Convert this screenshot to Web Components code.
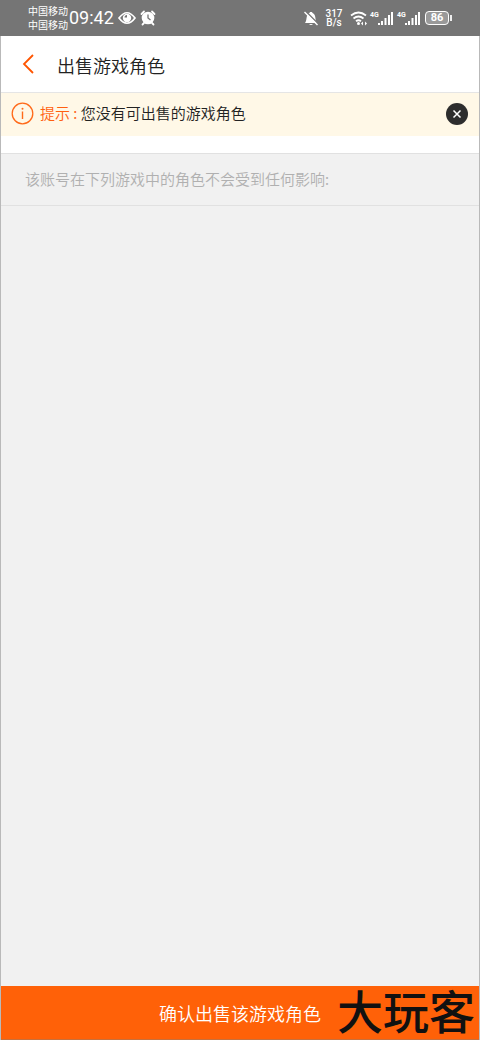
<!DOCTYPE html>
<html lang="zh-CN">
<head>
<meta charset="utf-8">
<meta name="viewport" content="width=device-width, initial-scale=1">
<title>出售游戏角色</title>
<style>
html, body { margin: 0; }
body { font-family: "Noto Sans CJK SC", sans-serif; background: #f1f1f1; color: #333; }
</style>
</head>
<body>
<sell-page></sell-page>
<script>
const define = (name, markup, setup) => {
  const template = document.createElement('template');
  template.innerHTML = '<style>*{box-sizing:border-box}svg{display:block;flex:none}button{font:inherit;border:0;padding:0;margin:0;background:none;cursor:pointer}</style>' + markup;
  customElements.define(name, class extends HTMLElement {
    constructor() {
      super();
      this.attachShadow({ mode: 'open' }).append(template.content.cloneNode(true));
      if (setup) setup(this);
    }
  });
};

define('signal-bars', `
<style>
:host { display: flex; align-items: flex-start; font: 700 7px/8px Roboto, sans-serif; }
span { width: 8px; }
</style>
<span>4G</span>
<svg width="16" height="15" viewBox="0 0 16 15" fill="#fff"><path d="M0 12h2v2H0zM3 10h2v4H3zM6.500 7h2v7h-2zM10 4h2v10h-2zM13 1h2v13h-2z"/></svg>`);

define('status-bar', `
<style>
:host { display: flex; align-items: center; justify-content: space-between; height: 36px; padding: 0 28px; background: #757575; color: #fff; }
.group { display: flex; align-items: center; }
.carriers { font-size: 10px; line-height: 14px; width: 41px; white-space: nowrap; }
.carriers div { height: 14px; }
.time { font: 400 18px/20px Roboto, sans-serif; margin-right: 4px; }
.left svg + svg { margin-left: 4px; }
.speed { font: 500 10px/9px Roboto, sans-serif; text-align: center; width: 18px; margin: 0 7px 0 6px; }
signal-bars { margin-left: 3px; }
.battery { margin-left: 4px; display: flex; align-items: center; }
.level { width: 24px; height: 14px; border: 1px solid #fff; border-radius: 4px; background: #999; font: 700 11px/12px Roboto, sans-serif; text-align: center; }
.tip { width: 2px; height: 6px; background: #eee; margin-left: 1px; }
</style>
<div class="group left">
  <div class="carriers"><div>中国移动</div><div>中国移动</div></div>
  <span class="time">09:42</span>
  <svg width="18" height="14" viewBox="0 0 18 14"><path d="M1 7Q9-3.500 17 7 9 17.500 1 7Z" fill="none" stroke="#fff" stroke-width="1.700"/><circle cx="9" cy="7" r="4.200" fill="#fff"/><path d="M6.500 6.500A2.500 2.500 0 0 1 9 4v2.500Z" fill="#757575"/></svg>
  <svg width="16" height="16" viewBox="0 0 16 16"><path d="m1.500 4 2.500-2.500m8 0L14.500 4M4 13l-1.500 1.500M12 13l1.500 1.500" stroke="#fff" stroke-width="1.800" stroke-linecap="round"/><circle cx="8" cy="8" r="6.300" fill="#fff"/><path d="M8 4.500V8l2.500 2" fill="none" stroke="#757575" stroke-width="1.300"/></svg>
</div>
<div class="group">
  <svg width="16" height="16" viewBox="0 0 16 16"><path d="M2 13c2-2 1-7 3-9 1-1 2-1 2-2h2c0 1 1 1 2 2 2 2 1 7 3 9ZM6 14h4q-2 2-4 0Z" fill="#fff"/><path d="M2.500 1 15.500 14" stroke="#757575" stroke-width="1.500"/><path d="M1.500 2 14.500 15" stroke="#fff" stroke-width="1.400"/></svg>
  <div class="speed">317<br>B/s</div>
  <svg width="17" height="16" viewBox="0 0 17 16"><path d="M1 5.500q7.500-6 15 0M3.500 8.500q5-4 10 0M6 11.200q2.500-2 5 0" fill="none" stroke="#fff" stroke-width="1.800"/><circle cx="8.500" cy="13.500" r="1.500" fill="#fff"/><path d="m11 13.500 2-2v4Zm6 0-2-2v4Z" fill="#fff"/></svg>
  <signal-bars></signal-bars><signal-bars></signal-bars>
  <div class="battery"><div class="level">86</div><div class="tip"></div></div>
</div>`);

define('page-header', `
<style>
:host { display: flex; align-items: center; height: 57px; padding: 0 19px; background: #fff; border-bottom: 1px solid #e5e5e5; }
button { width: 16px; height: 24px; display: grid; place-items: center; margin-right: 21px; }
h1 { margin: 2px 0 0; font-size: 18px; line-height: 26px; font-weight: 350; color: #222; }
</style>
<button type="button" aria-label="返回"><svg width="16" height="22" viewBox="0 0 16 22"><path d="M13 2 4 11l9 9" fill="none" stroke="#ff5500" stroke-width="1.800"/></svg></button>
<h1><slot></slot></h1>`);

define('tip-banner', `
<style>
:host { display: flex; align-items: center; height: 43px; padding: 0 11px 2px 10px; background: #fff8e7; font-size: 15px; line-height: 22px; font-weight: 350; color: #222; }
p { margin: 0 auto 2px 6px; }
.label { color: #ff6010; }
button { border-radius: 50%; }
</style>
<svg width="23" height="23" viewBox="0 0 23 23"><circle cx="11.500" cy="11.500" r="10.300" fill="none" stroke="#ff6a1a" stroke-width="1.300"/><path d="M11.500 9.500V17" stroke="#ff6a1a" stroke-width="1.400"/><circle cx="11.500" cy="6.800" r="1" fill="#ff6a1a"/></svg>
<p><span class="label">提示 :</span> <slot></slot></p>
<button type="button" aria-label="关闭"><svg width="22" height="22" viewBox="0 0 22 22"><circle cx="11" cy="11" r="11" fill="#2d2d2d"/><path d="m7.500 7.500 7 7m0-7-7 7" stroke="#fff" stroke-width="1.500"/></svg></button>`, host => {
  host.shadowRoot.querySelector('button').addEventListener('click', () => host.remove());
});

define('section-note', `
<style>
:host { display: block; margin-top: 17px; padding: 14px 24px 15px; border: solid #e1e1e1; border-width: 1px 0; background: #f1f1f1; font-size: 15px; line-height: 22px; font-weight: 350; color: #b0b0b0; }
</style>
<slot></slot>`);

define('brand-mark', `
<style>
:host { display: block; font-size: 46px; line-height: 50px; font-weight: 500; color: #111; white-space: nowrap; }
</style>
<slot></slot>`);

define('action-bar', `
<style>
:host { display: block; position: relative; border-bottom: 1px solid #c8703c; }
button { display: block; width: 100%; height: 53px; background: #ff6108; color: #fff; font-size: 18px; line-height: 26px; font-weight: 350; }
::slotted(brand-mark) { position: absolute; right: 4px; bottom: 5px; pointer-events: none; }
</style>
<button type="button"><slot></slot></button>
<slot name="mark"></slot>`);

define('sell-page', `
<style>
:host { display: flex; flex-direction: column; min-height: 100vh; }
main { flex: 1; display: flex; flex-direction: column; border: solid #b9b9b9; border-width: 0 1px; }
.top { background: #fff; }
.space { flex: 1; }
</style>
<status-bar></status-bar>
<main>
  <page-header>出售游戏角色</page-header>
  <div class="top">
    <tip-banner>您没有可出售的游戏角色</tip-banner>
    <section-note>该账号在下列游戏中的角色不会受到任何影响:</section-note>
  </div>
  <div class="space"></div>
  <action-bar>确认出售该游戏角色<brand-mark slot="mark">大玩客</brand-mark></action-bar>
</main>`);
</script>
</body>
</html>
